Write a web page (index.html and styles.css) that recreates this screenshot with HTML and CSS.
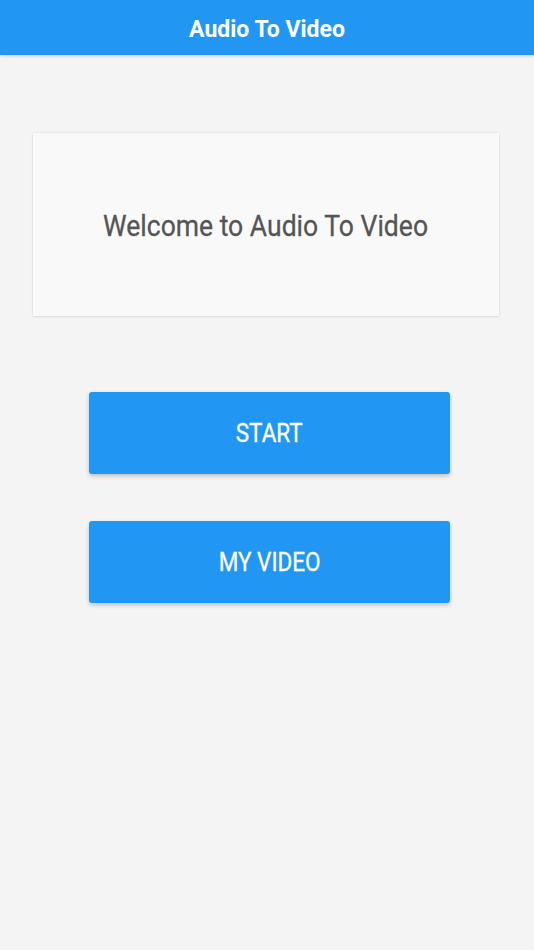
FILE: index.html
```html
<!DOCTYPE html>
<html>
<head>
<meta charset="utf-8">
<link rel="stylesheet" href="styles.css">
</head>
<body>
<header class="appbar"><span class="title">Audio To Video</span></header>
<main class="content">
  <section class="card"><span class="welcome">Welcome to Audio To Video</span></section>
  <div class="actions">
    <button class="btn"><span class="label">START</span></button>
    <button class="btn"><span class="label">MY VIDEO</span></button>
  </div>
</main>
</body>
</html>
```
FILE: styles.css
```css
html, body {
  margin: 0;
  padding: 0;
  background: #f4f4f4;
  font-family: Roboto, "Noto Sans", sans-serif;
}
body {
  width: 534px;
  height: 950px;
  overflow: hidden;
}
.appbar {
  height: 55px;
  background: #2196f3;
  display: flex;
  align-items: center;
  justify-content: center;
  box-shadow: 0 1px 3px rgba(0,0,0,0.18);
  position: relative;
  z-index: 1;
}
.title {
  color: #fff;
  font-weight: 700;
  font-size: 23px;
  margin-top: 3px;
}
.content {
  display: flex;
  flex-direction: column;
}
.card {
  margin: 78px 35px 0 33px;
  height: 183px;
  background: #f9f9f9;
  box-shadow: 0 0 2px rgba(0,0,0,0.12), 0 1px 2px rgba(0,0,0,0.06);
  display: flex;
  align-items: center;
  justify-content: center;
}
.welcome {
  color: #555;
  font-size: 29px;
  display: inline-block;
  transform: scaleX(0.915);
  margin-top: 2px;
  -webkit-text-stroke: 0.3px #555;
}
.actions {
  margin: 76px 84px 0 89px;
  display: flex;
  flex-direction: column;
  gap: 47px;
}
.btn {
  height: 82px;
  border: none;
  border-radius: 3px;
  background: #2196f3;
  box-shadow: 0 2px 4px rgba(0,0,0,0.22);
  color: #fff;
  font-family: Roboto, "Noto Sans", sans-serif;
  font-size: 25px;
  padding: 0;
  display: flex;
  align-items: center;
  justify-content: center;
}
.label {
  display: inline-block;
  transform: scaleX(0.9);
  margin-top: 1px;
  -webkit-text-stroke: 0.3px #fff;
}
```
